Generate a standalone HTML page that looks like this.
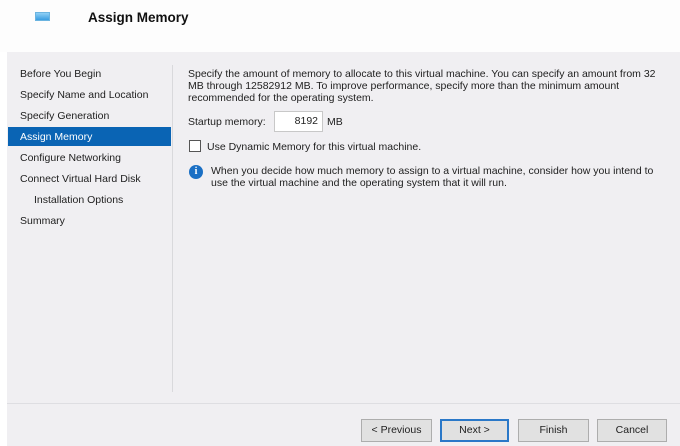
<!DOCTYPE html>
<html><head><style>
*{margin:0;padding:0;box-sizing:border-box}
body{width:680px;height:446px;background:#fff;font-family:"Liberation Sans",sans-serif;font-size:10.5px;color:#1e1e1e;position:relative;overflow:hidden}
.hdr{position:absolute;left:0;top:0;width:680px;height:52px;background:#fdfdfd}
.title{position:absolute;left:88px;top:10px;font-size:13.5px;font-weight:bold;color:#111}
.icon{position:absolute;left:35px;top:12px;width:15px;height:9px;background:linear-gradient(#8fd0f5,#3a9de0);border:1px solid #6bb4e0}
.main{position:absolute;left:7px;top:52px;width:673px;height:394px;background:#f0eff2}
.nav div{position:absolute;left:13px;white-space:nowrap}
.sel{position:absolute;left:1px;top:75px;width:163px;height:19px;background:#0a64b4}
.vsep{position:absolute;left:165px;top:13px;width:1px;height:327px;background:#d9d9dc}
.hsep{position:absolute;left:0;top:351px;width:673px;height:1px;background:#dedee2}
.t{position:absolute;white-space:nowrap}
.btn{position:absolute;top:367px;height:23px;background:#e1e1e1;border:1px solid #adadad;text-align:center;line-height:21px}
</style></head><body>
<div class="hdr"><div class="icon"></div><div class="title">Assign Memory</div></div>
<div class="main">
<div class="sel"></div>
<div class="nav">
<div style="top:16px">Before You Begin</div>
<div style="top:37px">Specify Name and Location</div>
<div style="top:58px">Specify Generation</div>
<div style="top:79px;color:#fff">Assign Memory</div>
<div style="top:100px">Configure Networking</div>
<div style="top:121px">Connect Virtual Hard Disk</div>
<div style="top:142px;left:27px">Installation Options</div>
<div style="top:163px">Summary</div>
</div>
<div class="vsep"></div>
<div class="t" style="left:181px;top:16px;line-height:12px">Specify the amount of memory to allocate to this virtual machine. You can specify an amount from 32<br>MB through 12582912 MB. To improve performance, specify more than the minimum amount<br>recommended for the operating system.</div>
<div class="t" style="left:181px;top:64px">Startup memory:</div>
<div style="position:absolute;left:267px;top:59px;width:49px;height:21px;background:#fff;border:1px solid #c8c8c8;text-align:right;padding-right:4px;line-height:19px">8192</div>
<div class="t" style="left:320px;top:64px">MB</div>
<div style="position:absolute;left:182px;top:88px;width:12px;height:12px;background:#fff;border:1px solid #555"></div>
<div class="t" style="left:200px;top:89px">Use Dynamic Memory for this virtual machine.</div>
<div style="position:absolute;left:182px;top:113px;width:14px;height:14px;border-radius:50%;background:#1a6fc4;color:#fff;font-weight:bold;font-size:10px;text-align:center;line-height:14px;font-family:'Liberation Serif',serif">i</div>
<div class="t" style="left:204px;top:113px;line-height:12px">When you decide how much memory to assign to a virtual machine, consider how you intend to<br>use the virtual machine and the operating system that it will run.</div>
<div class="hsep"></div>
<div class="btn" style="left:354px;width:71px">&lt; Previous</div>
<div class="btn" style="left:433px;width:69px;border:2px solid #2a78c8;line-height:19px">Next &gt;</div>
<div class="btn" style="left:511px;width:71px">Finish</div>
<div class="btn" style="left:590px;width:70px">Cancel</div>
</div>
</body></html>
